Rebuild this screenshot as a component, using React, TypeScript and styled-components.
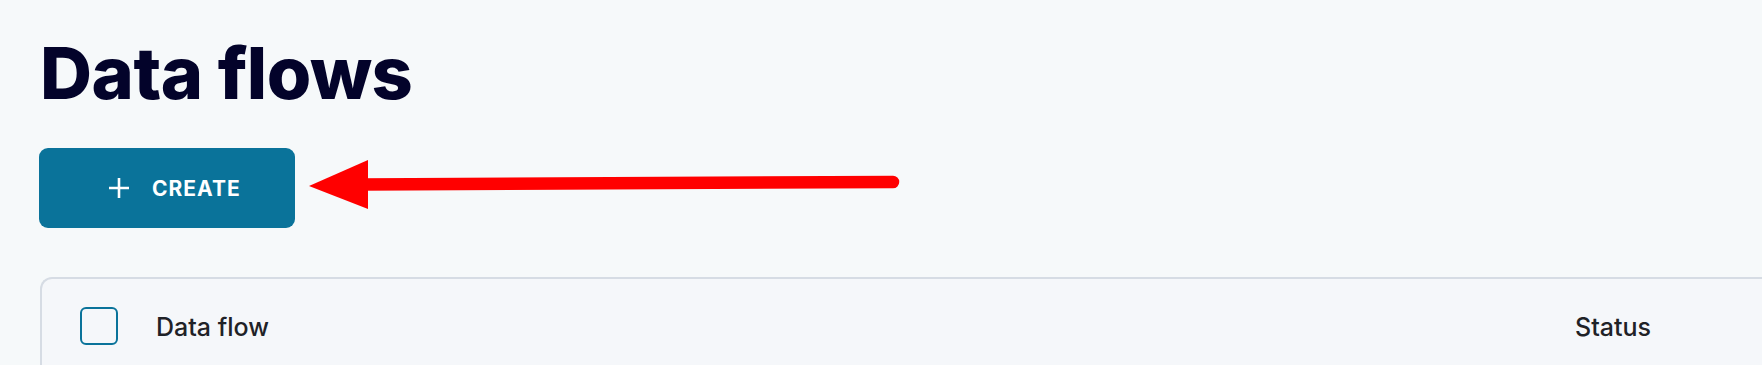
import React from 'react';
import styled, { createGlobalStyle } from 'styled-components';

const GlobalStyle = createGlobalStyle`
  html, body {
    margin: 0;
    padding: 0;
    background: #f6f9fa;
    overflow: hidden;
  }
  * {
    box-sizing: border-box;
  }
`;

function PlusIcon(): JSX.Element {
  return (
    <svg width="22" height="22" viewBox="0 0 22 22" fill="none">
      <path d="M1 11h20M11 1v20" stroke="#ffffff" strokeWidth="2.6" />
    </svg>
  );
}

// red annotation arrow pointing at the create button
function Annotation(): JSX.Element {
  return (
    <ArrowLayer width="920" height="230" viewBox="0 0 920 230">
      <path d="M362 184.5L893 182" stroke="#ff0000" strokeWidth="12.5" strokeLinecap="round" />
      <polygon points="309,186 368,160 368,209" fill="#ff0000" />
    </ArrowLayer>
  );
}

function App(): JSX.Element {
  return (
    <Page>
      <GlobalStyle />
      <Title>Data flows</Title>
      <CreateButton type="button">
        <PlusIcon />
        <span>CREATE</span>
      </CreateButton>
      <TableCard>
        <HeaderRow>
          <Checkbox type="button" aria-label="Select all" />
          <HeaderCell>Data flow</HeaderCell>
          <HeaderCell>Status</HeaderCell>
        </HeaderRow>
      </TableCard>
      <Annotation />
    </Page>
  );
}

export default App;

const Page = styled.main`
  position: relative;
  display: flex;
  flex-direction: column;
  align-items: flex-start;
  padding: 37px 0 0 40px;
  width: 100%;
  font-family: Inter, 'Noto Sans', sans-serif;

  & > * {
    flex-shrink: 0;
  }
`;

const Title = styled.h1`
  margin: 0 0 39px;
  font-size: 72px;
  line-height: 72px;
  font-weight: 800;
  letter-spacing: -0.5px;
  color: #03032a;
`;

const CreateButton = styled.button`
  display: flex;
  align-items: center;
  gap: 22px;
  width: 256px;
  height: 80px;
  padding: 0 0 0 69px;
  margin: 0 0 49px -1px;
  background-color: #0a739a;
  border: none;
  border-radius: 9px;
  color: #ffffff;
  font-family: Inter, sans-serif;
  font-size: 21px;
  font-weight: 700;
  letter-spacing: 1px;
  cursor: pointer;
`;

const ArrowLayer = styled.svg`
  position: absolute;
  left: 0;
  top: 0;
`;

const TableCard = styled.section`
  width: calc(100% + 40px);
  background: #f5f7fa;
  border: 2px solid #d6dce4;
  border-right: none;
  border-bottom: none;
  border-top-left-radius: 12px;
`;

const HeaderRow = styled.div`
  display: grid;
  grid-template-columns: 38px 1381px 1fr;
  column-gap: 38px;
  align-items: center;
  height: 96px;
  padding-left: 38px;
`;

const Checkbox = styled.button`
  width: 38px;
  height: 38px;
  padding: 0;
  background: transparent;
  border: 2.5px solid #0a739a;
  border-radius: 6px;
  margin-top: -3px;
`;

const HeaderCell = styled.div`
  font-size: 25px;
  font-weight: 500;
  color: #1f2227;
`;
